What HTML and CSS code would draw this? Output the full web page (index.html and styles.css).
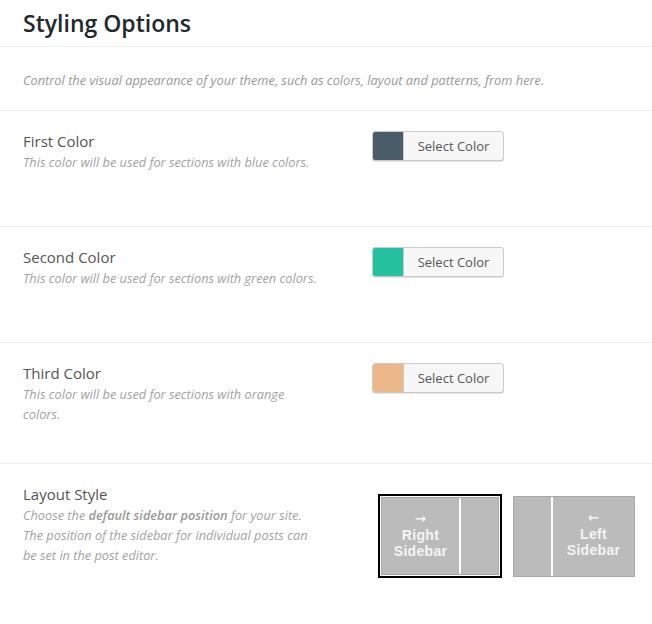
FILE: index.html
```html
<!DOCTYPE html>
<html>
	<head>
		<meta charset="utf-8">
		<title>Styling Options</title>
		<link rel="stylesheet" href="styles.css">
	</head>
	<body>
		<div class="panel">
			<div class="head"><h2>Styling Options</h2></div>
			<div class="intro">Control the visual appearance of your theme, such as colors, layout and patterns, from here.</div>

			<div class="row">
				<div class="info">
					<div class="label">First Color</div>
					<p class="desc">This color will be used for sections with blue colors.</p>
				</div>
				<div class="field">
					<button class="picker"><span class="swatch blue"></span><span class="pick-text">Select Color</span></button>
				</div>
			</div>

			<div class="row">
				<div class="info">
					<div class="label">Second Color</div>
					<p class="desc">This color will be used for sections with green colors.</p>
				</div>
				<div class="field">
					<button class="picker"><span class="swatch green"></span><span class="pick-text">Select Color</span></button>
				</div>
			</div>

			<div class="row">
				<div class="info">
					<div class="label">Third Color</div>
					<p class="desc">This color will be used for sections with orange colors.</p>
				</div>
				<div class="field">
					<button class="picker"><span class="swatch orange"></span><span class="pick-text">Select Color</span></button>
				</div>
			</div>

			<div class="row last">
				<div class="info">
					<div class="label">Layout Style</div>
					<p class="desc">Choose the <b>default sidebar position</b> for your site. The position of the sidebar for individual posts can be set in the post editor.</p>
				</div>
				<div class="field">
					<div class="layouts">
						<div class="layout selected">
							<div class="thumb">
								<div class="main"><span class="arrow">&rarr;</span><br>Right<br>Sidebar</div>
								<div class="side"></div>
							</div>
						</div>
						<div class="layout">
							<div class="thumb">
								<div class="side"></div>
								<div class="main"><span class="arrow">&larr;</span><br>Left<br>Sidebar</div>
							</div>
						</div>
					</div>
				</div>
			</div>
		</div>
	</body>
</html>
```
FILE: styles.css
```css
body{
	margin: 0;
	background: #fff;
	font-family: "Open Sans", "Liberation Sans", sans-serif;
}
.head{
	padding: 8px 23px 8px;
	border-bottom: 1px solid #eee;
}
.head h2{
	margin: 0;
	font-size: 23px;
	line-height: 30px;
	font-weight: 600;
	color: #23282d;
}
.intro{
	padding: 23px 23px 20px;
	font-size: 12.8px;
	line-height: 20px;
	font-style: italic;
	color: #999;
	border-bottom: 1px solid #eee;
}
.row{
	display: flex;
	padding: 20px 23px;
	border-bottom: 1px solid #eee;
}
.row.last{
	border-bottom: none;
}
.info{
	flex-shrink: 0;
	width: 300px;
	margin-right: 49px;
}
.label{
	font-size: 15px;
	line-height: 20px;
	color: #555;
}
.desc{
	margin: 1px 0 19px;
	font-size: 12.75px;
	line-height: 20px;
	font-style: italic;
	color: #a3a3a3;
}
.desc b{
	font-weight: 600;
	color: #999;
}
.field{
	min-height: 75px;
}
.picker{
	display: flex;
	width: 132px;
	height: 30px;
	padding: 0;
	border: 1px solid #ccc;
	border-radius: 3px;
	background: #f7f7f7;
	box-shadow: 0 1px 0 #e4e4e4;
	font-family: inherit;
	overflow: hidden;
}
.swatch{
	width: 30px;
	height: 100%;
	border-right: 1px solid #ccc;
}
.blue{
	background: #4a5c68;
}
.green{
	background: #25c19f;
}
.orange{
	background: #ecb88a;
}
.pick-text{
	flex: 1;
	font-size: 13px;
	line-height: 28px;
	color: #555;
	text-align: center;
}
.layouts{
	display: flex;
	align-items: center;
	margin: 10px 0 0 6px;
}
.layout{
	flex-shrink: 0;
}
.layout.selected{
	margin-right: 11px;
	border: 2px solid #000;
	padding: 1px;
}
.thumb{
	display: flex;
	width: 120px;
	height: 79px;
	border: 1px solid #a9a9a9;
	background: #bbb;
}
.selected .thumb{
	width: 116px;
	height: 76px;
}
.main{
	flex: 1;
	padding-top: 12px;
	font-family: "Liberation Sans", Arial, sans-serif;
	font-size: 14px;
	font-weight: bold;
	line-height: 16px;
	letter-spacing: 0.3px;
	color: #f4f4f4;
	text-align: center;
}
.arrow{
	font-family: "DejaVu Sans", sans-serif;
	font-size: 13px;
	font-weight: bold;
}
.side{
	width: 37px;
}
.thumb .side:first-child{
	border-right: 2px solid #fff;
}
.thumb .main:first-child{
	border-right: 2px solid #fff;
}
```
